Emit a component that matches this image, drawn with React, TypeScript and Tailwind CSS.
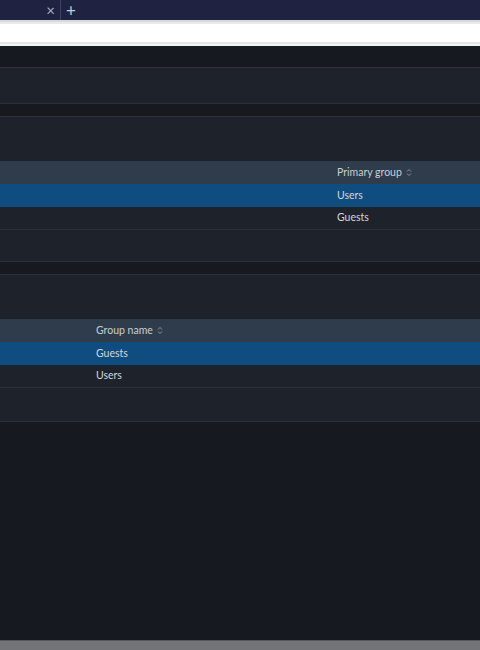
const font = { fontFamily: 'Lato, "Open Sans", sans-serif' };

function SortIcon() {
  return (
    <svg width="6" height="9" viewBox="0 0 6 9" className="ml-1 text-[#8a939d]">
      <path d="M1 3.5 L3 1.5 L5 3.5" fill="none" stroke="currentColor" strokeWidth="1" />
      <path d="M1 5.5 L3 7.5 L5 5.5" fill="none" stroke="currentColor" strokeWidth="1" />
    </svg>
  );
}

function Table({ col, header, rows, bodyH }: { col: number; header: string; rows: string[]; bodyH: number }) {
  return (
    <div className="border-y border-[#2b313a] bg-[#1e222b]">
      <div className="h-[44px]" />
      <div className="flex h-[23px] items-center bg-[#2e3c4c] text-[10.5px] text-[#c9ced4]">
        <div style={{ width: col }} />
        <span className="flex items-center">
          {header}
          <SortIcon />
        </span>
      </div>
      {rows.map((r, i) => (
        <div
          key={r}
          className={
            "flex h-[23px] items-center text-[10.5px] text-[#d3d7dc] " +
            (i === 0 ? "bg-[#0f4c7f]" : "border-b border-[#2b313a]")
          }
        >
          <div style={{ width: col }} />
          {r}
        </div>
      ))}
      <div style={{ height: bodyH }} />
    </div>
  );
}

export default function App() {
  return (
    <div className="flex h-[650px] w-[480px] flex-col overflow-hidden bg-[#161a20]" style={font}>
      <div className="flex h-[20px] items-center bg-[#1f2341]">
        <div className="w-[41px]" />
        <span className="w-[19px] text-center text-[15px] leading-none text-[#a7abbd]">×</span>
        <div className="h-full w-px bg-[#3e4260]" />
        <span className="w-[20px] text-center text-[17px] leading-none text-[#c8cbd8]">+</span>
      </div>
      <div className="h-[2px] bg-[#d6d8dc]" />
      <div className="h-[2px] bg-[#e9eaec]" />
      <div className="h-[18px] bg-white" />
      <div className="h-[2px] bg-[#e4e5e7]" />
      <div className="h-[2px] bg-[#f2f3f5]" />
      <div className="h-[21px]" />
      <div className="h-[37px] border-y border-[#2b313a] bg-[#1e222b]" />
      <div className="h-[12px]" />
      <Table col={337} header="Primary group" rows={["Users", "Guests"]} bodyH={31} />
      <div className="h-[12px]" />
      <Table col={96} header="Group name" rows={["Guests", "Users"]} bodyH={33} />
      <div className="flex-1" />
      <div className="h-[10px] border-t border-[#55585c] bg-[#727477]" />
    </div>
  );
}
